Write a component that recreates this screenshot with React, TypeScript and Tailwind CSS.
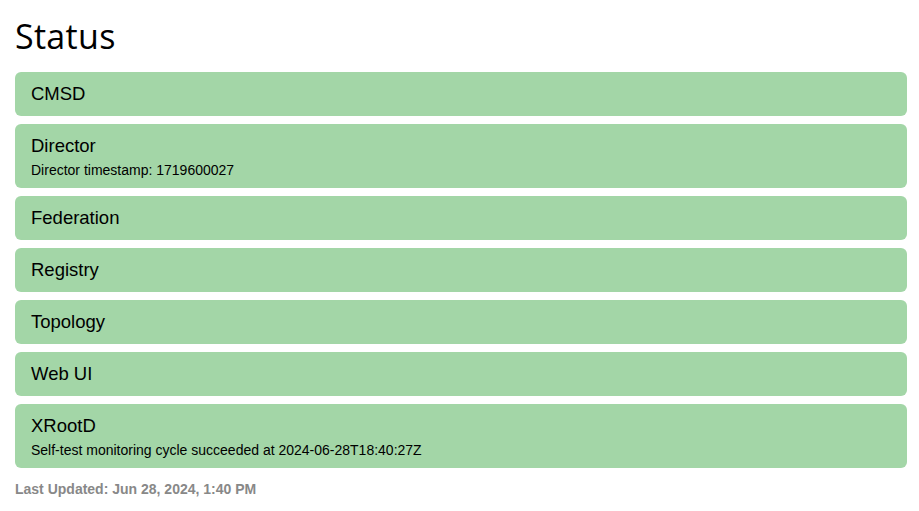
const services = [
  { name: "CMSD" },
  { name: "Director", message: "Director timestamp: 1719600027" },
  { name: "Federation" },
  { name: "Registry" },
  { name: "Topology" },
  { name: "Web UI" },
  { name: "XRootD", message: "Self-test monitoring cycle succeeded at 2024-06-28T18:40:27Z" },
];

export default function App() {
  return (
    <main className="min-h-screen bg-white pl-[15px] pr-[12px] pt-[16px] font-['Liberation_Sans',Arial,sans-serif] text-black">
      <h1 className="mb-[16px] h-[40px] text-[34px] leading-[40px] font-['Open_Sans',sans-serif] tracking-[0.3px]">Status</h1>
      <div className="flex flex-col gap-[8px]">
        {services.map((s) => (
          <div key={s.name} className="rounded-[6px] bg-[#a3d6a7] px-[16px] py-[8px]">
            <div className="text-[18.5px] leading-[28px]">{s.name}</div>
            {s.message && <div className="text-[14px] leading-[20px]">{s.message}</div>}
          </div>
        ))}
      </div>
      <div className="mt-[12px] text-[14px] leading-[18px] font-bold text-[#888888]">Last Updated: Jun 28, 2024, 1:40 PM</div>
    </main>
  );
}
